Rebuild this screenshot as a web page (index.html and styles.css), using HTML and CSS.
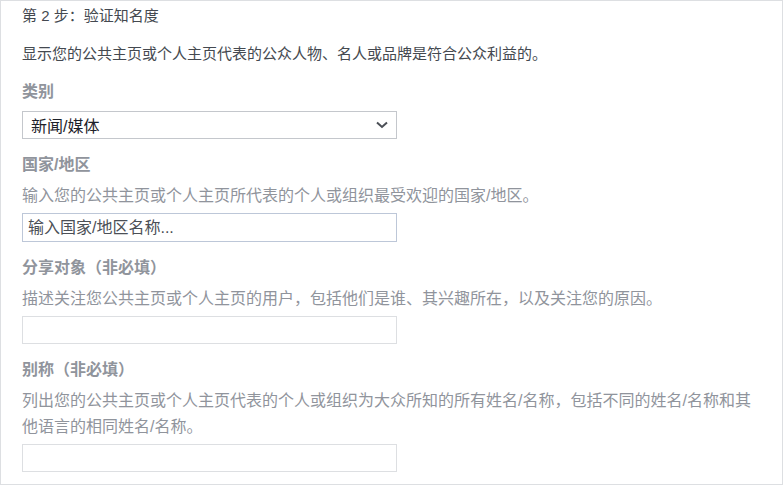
FILE: index.html
```html
<!DOCTYPE html>
<html lang="zh-CN">
<head>
<meta charset="utf-8">
<title>验证知名度</title>
<link rel="stylesheet" href="styles.css">
</head>
<body>
<div class="card">
  <div class="step">第 2 步：验证知名度</div>
  <p class="intro">显示您的公共主页或个人主页代表的公众人物、名人或品牌是符合公众利益的。</p>

  <div class="label first">类别</div>
  <div class="select">
    <span>新闻/媒体</span>
    <svg class="chev" width="12" height="8" viewBox="0 0 12 8"><path d="M1 1.5 L6 6 L11 1.5" fill="none" stroke="#4b4f56" stroke-width="2"/></svg>
  </div>

  <div class="label">国家/地区</div>
  <p class="desc">输入您的公共主页或个人主页所代表的个人或组织最受欢迎的国家/地区。</p>
  <input class="field country" type="text" placeholder="输入国家/地区名称...">

  <div class="label">分享对象（非必填）</div>
  <p class="desc">描述关注您公共主页或个人主页的用户，包括他们是谁、其兴趣所在，以及关注您的原因。</p>
  <input class="field" type="text">

  <div class="label">别称（非必填）</div>
  <p class="desc">列出您的公共主页或个人主页代表的个人或组织为大众所知的所有姓名/名称，包括不同的姓名/名称和其他语言的相同姓名/名称。</p>
  <input class="field" type="text">
</div>
</body>
</html>
```

FILE: styles.css
```css
* { box-sizing: border-box; }
html, body { margin: 0; padding: 0; background: #fff; }
body {
  font-family: "Liberation Sans", "Noto Sans CJK SC", sans-serif;
  color: #444950;
}
.card {
  width: 783px;
  height: 485px;
  border: 1px solid #dddfe2;
  padding: 5px 0 0 21px;
  overflow: hidden;
}
.step {
  font-size: 15px;
  line-height: 20px;
  height: 20px;
  color: #444950;
}
.intro {
  margin: 18px 0 0;
  font-size: 15px;
  line-height: 20px;
  color: #444950;
}
.label {
  margin-top: 16px;
  font-size: 16px;
  line-height: 20px;
  font-weight: bold;
  color: #90949c;
}
.label.first { margin-top: 18px; }
.desc {
  margin: 8px 0 0;
  font-size: 16px;
  line-height: 26px;
  color: #90949c;
  padding-right: 18px;
}
.select {
  margin-top: 9px;
  width: 375px;
  height: 28px;
  border: 1px solid #c4c7cc;
  display: flex;
  align-items: center;
  justify-content: space-between;
  padding: 0 8px 0 8px;
  font-size: 16px;
  color: #1d2129;
}
.chev { display: block; }
.field {
  display: block;
  margin: 4px 0 0;
  width: 375px;
  height: 28px;
  border: 1px solid #dddfe2;
  border-radius: 0;
  padding: 0 5px;
  font-family: "Liberation Sans", "Noto Sans CJK SC", sans-serif;
  font-size: 16px;
  color: #1d2129;
  background: #fff;
  outline: none;
}
.field.country {
  height: 29px;
  border-color: #bdc7d8;
}
.field::placeholder { color: #4b4f56; opacity: 1; }
```
